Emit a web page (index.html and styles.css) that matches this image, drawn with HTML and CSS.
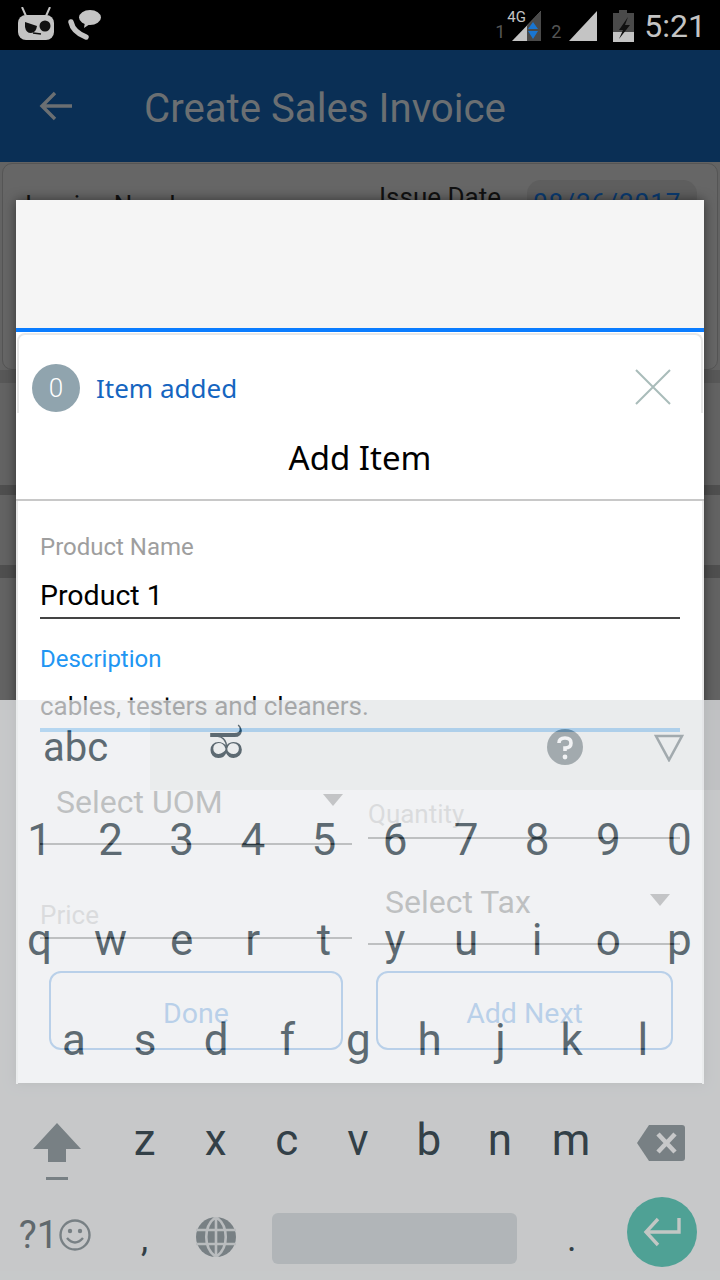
FILE: index.html
```html
<!DOCTYPE html>
<html lang="en">
<head>
    <meta charset="UTF-8">
    <meta name="viewport" content="width=device-width, initial-scale=1.0">
    <title>Create Sales Invoice</title>
    <link rel="stylesheet" href="styles.css">
</head>
<body>
    <div class="screen">
        <header class="status-bar">
            <div class="status-left">
                <svg class="mascot" width="36" height="33" viewBox="0 0 36 33">
                    <path d="M4 0l4 9M32 0l-4 9" stroke="#c4c4c4" stroke-width="2" fill="none"/>
                    <rect x="0" y="8" width="36" height="25" rx="8" fill="#c4c4c4"/>
                    <path d="M7 15l12 4q-1 7-6 7t-6-6z" fill="#111"/>
                    <circle cx="27" cy="19" r="5.5" fill="#111"/>
                    <path d="M15 26l8 1" stroke="#111" stroke-width="1.6"/>
                </svg>
                <svg width="34" height="30" viewBox="0 0 34 30">
                    <path d="M4 12q2 10 15 15" stroke="#c4c4c4" stroke-width="5.5" stroke-linecap="round" fill="none"/>
                    <ellipse cx="23" cy="7.5" rx="11" ry="7.5" fill="#c4c4c4"/>
                    <path d="M18 12l-1 6 6-4z" fill="#c4c4c4"/>
                </svg>
            </div>
            <div class="status-right">
                <span class="sim-num">1</span>
                <span class="signal">
                    <em class="net-type">4G</em>
                    <svg width="29" height="30" viewBox="0 0 29 30">
                        <path d="M29 0v30H0z" fill="#c4c4c4"/>
                        <path d="M15 14.5L29 0v30H15z" fill="#4a4a4a"/>
                        <path d="M21 11l5 7H16zM21 28l-5-8h10z" fill="#1976d2"/>
                    </svg>
                </span>
                <span class="sim-num sim-two">2</span>
                <svg class="signal" width="28" height="30" viewBox="0 0 28 30"><path d="M28 0v30H0z" fill="#c4c4c4"/></svg>
                <svg class="battery" width="21" height="32" viewBox="0 0 21 32">
                    <path d="M6 0h8v3h7v29H0V3h6z" fill="#4a4a4a"/>
                    <path d="M0 22h21v10H0z" fill="#c4c4c4"/>
                    <path d="M15 7L6 20h4l-4 9 11-14h-5z" fill="#111"/>
                </svg>
                <span class="clock">5:21</span>
            </div>
        </header>

        <div class="app-bar">
            <svg class="back" width="34" height="30" viewBox="0 0 34 30">
                <path d="M33 15H3M16 2L3 15l13 13" stroke="#6b6f72" stroke-width="3.4" fill="none"/>
            </svg>
            <h1>Create Sales Invoice</h1>
        </div>

        <div class="page">
            <section class="invoice-card">
                <span class="invoice-label">Invoice Number</span>
                <span class="issue-label">Issue Date</span>
                <span class="issue-date">08/26/2017</span>
            </section>
            <div class="band band-one"></div>
            <div class="band band-two"></div>
            <div class="band band-three"></div>
        </div>

        <div class="modal">
            <div class="modal-top"></div>
            <div class="modal-head">
                <div class="added-row">
                    <span class="count">0</span>
                    <span class="added-text">Item added</span>
                    <svg class="close" width="36" height="36" viewBox="0 0 36 36">
                        <path d="M1 1l34 34M35 1L1 35" stroke="#a9bcba" stroke-width="2" fill="none"/>
                    </svg>
                </div>
                <h2>Add Item</h2>
            </div>
            <form class="item-form">
                <div class="field field-name">
                    <label>Product Name</label>
                    <p class="value">Product 1</p>
                </div>
                <div class="field field-desc">
                    <label class="active">Description</label>
                    <p class="value desc">cables, testers and cleaners.</p>
                </div>
                <div class="two-col col-one">
                    <div class="picker uom"><span>Select UOM</span><i class="caret"></i></div>
                    <div class="small-field qty"><label>Quantity</label></div>
                </div>
                <div class="two-col col-two">
                    <div class="small-field price"><label>Price</label></div>
                    <div class="picker tax"><span>Select Tax</span><i class="caret"></i></div>
                </div>
                <div class="actions">
                    <button type="button" class="button">Done</button>
                    <button type="button" class="button">Add Next</button>
                </div>
            </form>
        </div>

        <div class="keyboard">
            <div class="strip">
                <div class="strip-abc">abc</div>
                <div class="strip-rest">
                    <span class="strip-glyph">ಹ</span>
                    <svg class="help" width="36" height="36" viewBox="0 0 36 36">
                        <circle cx="18" cy="18" r="18" fill="#818c91"/>
                        <path d="M12 14q0-5 6-5t6 5-6 5v3" stroke="#eceef0" stroke-width="3.6" fill="none"/>
                        <circle cx="18" cy="28" r="2.4" fill="#eceef0"/>
                    </svg>
                    <svg class="collapse" width="30" height="28" viewBox="0 0 30 28">
                        <path d="M2 2h26L15 26z" stroke="#818c91" stroke-width="2.6" fill="none"/>
                    </svg>
                </div>
            </div>
            <div class="key-row digits">
                <span>1</span><span>2</span><span>3</span><span>4</span><span>5</span><span>6</span><span>7</span><span>8</span><span>9</span><span>0</span>
            </div>
            <div class="key-row">
                <span>q</span><span>w</span><span>e</span><span>r</span><span>t</span><span>y</span><span>u</span><span>i</span><span>o</span><span>p</span>
            </div>
            <div class="key-row inset">
                <span>a</span><span>s</span><span>d</span><span>f</span><span>g</span><span>h</span><span>j</span><span>k</span><span>l</span>
            </div>
            <div class="key-row">
                <span class="wide">
                    <svg width="48" height="39" viewBox="0 0 48 39">
                        <path d="M24 0l24 26H33v13H15V26H0z" fill="#818c91"/>
                    </svg>
                    <i class="shift-line"></i>
                </span>
                <span>z</span><span>x</span><span>c</span><span>v</span><span>b</span><span>n</span><span>m</span>
                <span class="wide backspace">
                    <svg width="48" height="36" viewBox="0 0 48 36">
                        <path d="M12 0h33q3 0 3 3v30q0 3-3 3H12L0 18z" fill="#818c91"/>
                        <path d="M21 9l17 18M38 9L21 27" stroke="#eceef0" stroke-width="4.5"/>
                    </svg>
                </span>
            </div>
            <div class="key-row bottom">
                <span class="wide symbols">?1<svg width="32" height="32" viewBox="0 0 32 32">
                    <circle cx="16" cy="16" r="14.5" stroke="#818c91" stroke-width="2.4" fill="none"/>
                    <circle cx="11" cy="12" r="2.2" fill="#818c91"/>
                    <circle cx="21" cy="12" r="2.2" fill="#818c91"/>
                    <path d="M8 19q8 9 16 0" stroke="#818c91" stroke-width="2.4" fill="none"/>
                </svg></span>
                <span class="comma">,</span>
                <span class="globe-key">
                    <svg width="40" height="40" viewBox="0 0 40 40">
                        <circle cx="20" cy="20" r="20" fill="#818c91"/>
                        <path d="M0 13h40M0 27h40M20 0v40M20 0c-13 9-13 31 0 40M20 0c13 9 13 31 0 40" stroke="#d9dde0" stroke-width="2.6" fill="none"/>
                    </svg>
                </span>
                <span class="space"></span>
                <span class="period">.</span>
                <span class="enter">
                    <svg width="38" height="32" viewBox="0 0 38 32">
                        <path d="M36 2v14H4M15 3L3 16l12 13" stroke="#e6ece9" stroke-width="3.4" fill="none"/>
                    </svg>
                </span>
            </div>
        </div>
    </div>
</body>
</html>
```

FILE: styles.css
```css
/* Basic Reset */
* {
    box-sizing: border-box;
    margin: 0;
    padding: 0;
}
body {
    font-family: Roboto, "Noto Sans", sans-serif;
    background: #666;
}
.screen {
    position: relative;
    width: 720px;
    height: 1280px;
    overflow: hidden;
    background: #636363;
}

/* Status bar */
.status-bar {
    display: flex;
    justify-content: space-between;
    align-items: center;
    height: 50px;
    padding: 0 14px 0 18px;
    background: #000;
}
.status-left {
    display: flex;
    align-items: center;
    gap: 13px;
}
.mascot {
    margin-bottom: 3px;
}
.status-right {
    display: flex;
    align-items: center;
    margin-top: 2px;
    color: #c4c4c4;
}
.sim-num {
    width: 17px;
    margin-top: 11px;
    font-size: 18px;
    color: #555;
}
.sim-two {
    width: 18px;
    margin-left: 10px;
}
.signal {
    position: relative;
    display: block;
    height: 30px;
}
.net-type {
    position: absolute;
    top: -1px;
    left: -5px;
    font-style: normal;
    font-size: 15px;
    line-height: 15px;
    color: #c4c4c4;
}
.battery {
    margin: 0 10px 0 16px;
}
.clock {
    font-size: 32px;
}

/* App bar */
.app-bar {
    display: flex;
    align-items: center;
    height: 112px;
    padding: 2px 0 0 39px;
    background: #0a2f55;
}
.back {
    margin-bottom: 2px;
}
.app-bar h1 {
    margin: 3px 0 0 71px;
    font-size: 40.2px;
    font-weight: 400;
    color: #6b6f72;
}

/* Page behind the dialog */
.page {
    padding-top: 1px;
}
.invoice-card {
    position: relative;
    height: 207px;
    margin: 0 2px;
    border: 1px solid #555;
    border-radius: 10px;
    background: #666;
    color: #111;
    font-size: 26px;
}
.invoice-label {
    position: absolute;
    top: 26px;
    left: 22px;
}
.issue-label {
    position: absolute;
    top: 18px;
    left: 376px;
}
.issue-date {
    position: absolute;
    top: 16px;
    left: 524px;
    width: 170px;
    height: 60px;
    padding: 8px 0 0 6px;
    border-radius: 14px;
    background: #5e5e5e;
    color: #0a3a70;
    font-size: 26px;
    letter-spacing: 1px;
}
.band {
    background: #4f4f4f;
}
.band-one {
    height: 13px;
    background: #585858;
}
.band-two {
    height: 10px;
    margin-top: 102px;
}
.band-three {
    height: 13px;
    margin-top: 70px;
}

/* Dialog */
.modal {
    position: absolute;
    top: 200px;
    left: 16px;
    width: 688px;
    height: 883px;
    background: #fff;
    border-radius: 3px 3px 0 0;
    box-shadow: 0 0 12px rgba(0,0,0,0.5);
}
.modal-top {
    height: 132px;
    background: #f5f5f5;
    border-bottom: 4px solid #0a7cff;
}
.modal-head {
    height: 168px;
    border-bottom: 2px solid #c8c8c8;
}
.added-row {
    display: flex;
    align-items: center;
    height: 80px;
    margin: 1px 1px 0;
    padding: 28px 30px 0 13px;
    border: 2px solid #e8e8e8;
    border-bottom: 0;
    border-radius: 8px 8px 0 0;
}
.count {
    display: flex;
    align-items: center;
    justify-content: center;
    width: 48px;
    height: 48px;
    border-radius: 50%;
    background: #90a4ae;
    color: #fff;
    font-size: 26px;
    font-weight: 300;
}
.added-text {
    flex: 1;
    margin-left: 16px;
    font-family: "Noto Sans", sans-serif;
    font-size: 26px;
    color: #1565c0;
}
.close {
    margin-bottom: 2px;
}
.modal-head h2 {
    margin-top: 23px;
    font-family: "Noto Sans", sans-serif;
    font-size: 33px;
    font-weight: 400;
    line-height: 44px;
    text-align: center;
    color: #000;
}

/* Form */
.item-form {
    height: 583px;
    padding: 0 22px;
    border-left: 2px solid #e8e8e8;
    border-right: 2px solid #e8e8e8;
}
.field label,
.small-field label {
    display: block;
    color: #9e9e9e;
    font-size: 24px;
    line-height: 28px;
}
.field label.active {
    color: #2196f3;
}
.small-field label {
    font-size: 26px;
    color: #aaa;
}
.field .value {
    font-size: 28.5px;
    line-height: 34px;
    color: #000;
}
.field-name {
    height: 118px;
    padding-top: 32px;
    border-bottom: 2px solid #444;
}
.field-name .value {
    margin-top: 18px;
}
.field-desc {
    height: 113px;
    padding-top: 26px;
    border-bottom: 4px solid #2196f3;
}
.field-desc .value.desc {
    margin-top: 18px;
    font-size: 26px;
    line-height: 30px;
}
.two-col {
    display: grid;
    grid-template-columns: 312px 312px;
    column-gap: 16px;
    align-items: start;
}
.picker {
    display: flex;
    align-items: center;
    justify-content: space-between;
    color: #444;
    font-size: 32px;
}
.caret {
    width: 0;
    height: 0;
    margin-bottom: 4px;
    border-left: 10px solid transparent;
    border-right: 10px solid transparent;
    border-top: 12px solid #555;
}
.uom {
    height: 113px;
    padding: 28px 9px 0 16px;
    border-bottom: 2px solid #444;
}
.qty {
    height: 107px;
    padding-top: 68px;
    border-bottom: 2px solid #444;
}
.col-two {
    height: 100px;
}
.price {
    height: 94px;
    padding-top: 56px;
    border-bottom: 2px solid #444;
}
.tax {
    height: 106px;
    margin-top: -6px;
    padding: 22px 10px 0 17px;
    border-bottom: 2px solid #444;
}
.actions {
    display: grid;
    grid-template-columns: 294px 297px;
    column-gap: 33px;
    margin: 26px 8px 0 9px;
}
.button {
    height: 79px;
    padding-top: 6px;
    border: 2px solid #2f80d8;
    border-radius: 12px;
    background: #fff;
    color: #2f80d8;
    font-family: Roboto, sans-serif;
    font-size: 28.5px;
}

/* Keyboard, see-through over the dialog */
.keyboard {
    position: absolute;
    top: 700px;
    left: 0;
    width: 720px;
    height: 580px;
    background: #eceef0;
    opacity: 0.73;
    color: #22343e;
}
.strip {
    display: flex;
    height: 90px;
    font-size: 40px;
}
.strip-abc {
    width: 150px;
    padding: 24px 0 0 43px;
}
.strip-rest {
    display: flex;
    flex: 1;
    align-items: flex-start;
    background: #e3e5e7;
}
.strip-glyph {
    margin: 3px 0 0 58px;
    font-family: "Noto Sans", "DejaVu Sans", sans-serif;
    font-size: 52px;
    line-height: 70px;
}
.help {
    margin: 29px 0 0 auto;
}
.collapse {
    margin: 34px 36px 0 71px;
}
.key-row {
    display: flex;
    align-items: center;
    height: 100px;
    padding-left: 4px;
    font-size: 44px;
}
.key-row span {
    display: flex;
    align-items: center;
    justify-content: center;
    flex: none;
    width: 71.1px;
    height: 100%;
}
.key-row.inset {
    padding-left: 38.5px;
}
.key-row span.wide {
    position: relative;
    width: 105px;
    padding-top: 5px;
}
.key-row span.backspace {
    margin-left: 2px;
}
.shift-line {
    position: absolute;
    bottom: 10px;
    left: 42px;
    width: 22px;
    height: 3px;
    background: #818c91;
}
.bottom {
    height: 90px;
}
.key-row span.symbols {
    gap: 1px;
    justify-content: flex-end;
    padding: 0 18px 0 0;
    font-size: 38px;
    color: #5f6b70;
}
.key-row .comma,
.key-row .period {
    padding-top: 8px;
    font-size: 36px;
}
.key-row .globe-key {
    padding-top: 4px;
}
.key-row .space {
    width: 245px;
    height: 51px;
    margin: 6px 19px 0 21px;
    border-radius: 6px;
    background: #ced4d8;
}
.key-row .enter {
    width: 70px;
    height: 70px;
    margin: -6px 0 0 20px;
    border-radius: 50%;
    background: #48b8a8;
}
```
